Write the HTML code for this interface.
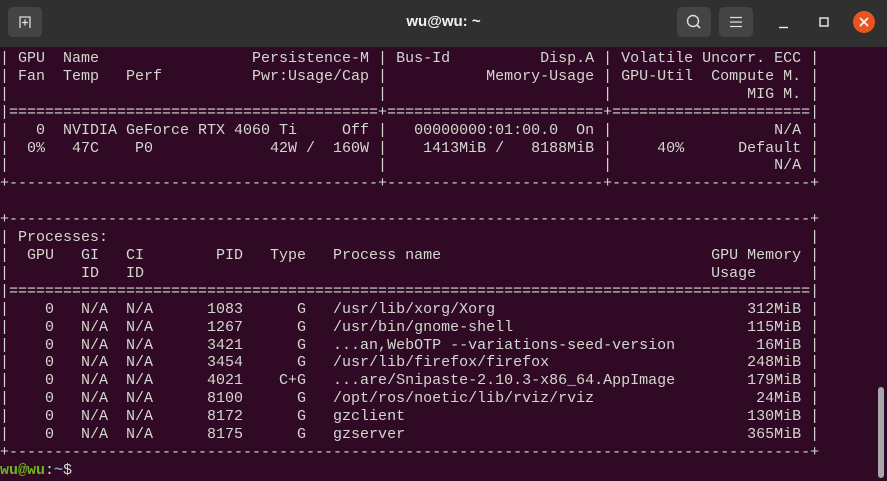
<!DOCTYPE html>
<html><head><meta charset="utf-8"><style>
html,body{margin:0;padding:0;width:887px;height:481px;overflow:hidden;background:#300a24;}
.tb{position:absolute;left:0;top:0;width:887px;height:47px;background:#303030;}
.title{position:absolute;left:0;width:887px;top:13px;text-align:center;color:#f2f2f2;font:bold 15px "Liberation Sans",sans-serif;}
.btn{position:absolute;top:7px;width:34px;height:30px;background:#444;border-radius:5px;}
pre{position:absolute;left:0;top:50px;margin:0;font:15px/17.9px "Liberation Mono",monospace;color:#d3d7cf;white-space:pre;}
.g{color:#6fb51c;font-weight:bold}.b{color:#729fcf;font-weight:bold}
.sb{position:absolute;left:878px;top:387px;width:6px;height:91px;background:#a8a8a8;border-radius:3px;}
</style></head><body>
<div class="tb">
<div class="btn" style="left:8px"><svg width="34" height="30"><path d="M12 21 V10 H22 V21" stroke="#ddd" fill="none" stroke-width="1.3"/><path d="M17 12.5 V18.5 M14 15.5 H20" stroke="#ddd" stroke-width="1.3"/></svg></div>
<div class="title">wu@wu: ~</div>
<div class="btn" style="left:677px"><svg width="34" height="30"><circle cx="16" cy="14" r="5.5" stroke="#ddd" fill="none" stroke-width="1.4"/><path d="M20 18 L23 21" stroke="#ddd" stroke-width="1.6"/></svg></div>
<div class="btn" style="left:719px"><svg width="34" height="30"><path d="M11 10.5 H23 M11 15 H23 M11 19.5 H23" stroke="#ddd" stroke-width="1.3"/></svg></div>
<svg style="position:absolute;left:770px;top:8px" width="117" height="30"><path d="M9 19.5 H18" stroke="#eee" stroke-width="1.4"/><rect x="50" y="10" width="8" height="8" stroke="#eee" fill="none" stroke-width="1.4"/><circle cx="94" cy="14" r="11" fill="#e95420"/><path d="M90 10 L98 18 M98 10 L90 18" stroke="#fff" stroke-width="1.6"/></svg>
</div>
<pre>| GPU  Name                 Persistence-M | Bus-Id          Disp.A | Volatile Uncorr. ECC |
| Fan  Temp   Perf          Pwr:Usage/Cap |           Memory-Usage | GPU-Util  Compute M. |
|                                         |                        |               MIG M. |
|=========================================+========================+======================|
|   0  NVIDIA GeForce RTX 4060 Ti     Off |   00000000:01:00.0  On |                  N/A |
|  0%   47C    P0             42W /  160W |    1413MiB /   8188MiB |     40%      Default |
|                                         |                        |                  N/A |
+-----------------------------------------+------------------------+----------------------+

+-----------------------------------------------------------------------------------------+
| Processes:                                                                              |
|  GPU   GI   CI        PID   Type   Process name                              GPU Memory |
|        ID   ID                                                               Usage      |
|=========================================================================================|
|    0   N/A  N/A      1083      G   /usr/lib/xorg/Xorg                            312MiB |
|    0   N/A  N/A      1267      G   /usr/bin/gnome-shell                          115MiB |
|    0   N/A  N/A      3421      G   ...an,WebOTP --variations-seed-version         16MiB |
|    0   N/A  N/A      3454      G   /usr/lib/firefox/firefox                      248MiB |
|    0   N/A  N/A      4021    C+G   ...are/Snipaste-2.10.3-x86_64.AppImage        179MiB |
|    0   N/A  N/A      8100      G   /opt/ros/noetic/lib/rviz/rviz                  24MiB |
|    0   N/A  N/A      8172      G   gzclient                                      130MiB |
|    0   N/A  N/A      8175      G   gzserver                                      365MiB |
+-----------------------------------------------------------------------------------------+
<span class="g">wu@wu</span>:<span class="b">~</span>$ </pre>
<div class="sb"></div>
</body></html>
